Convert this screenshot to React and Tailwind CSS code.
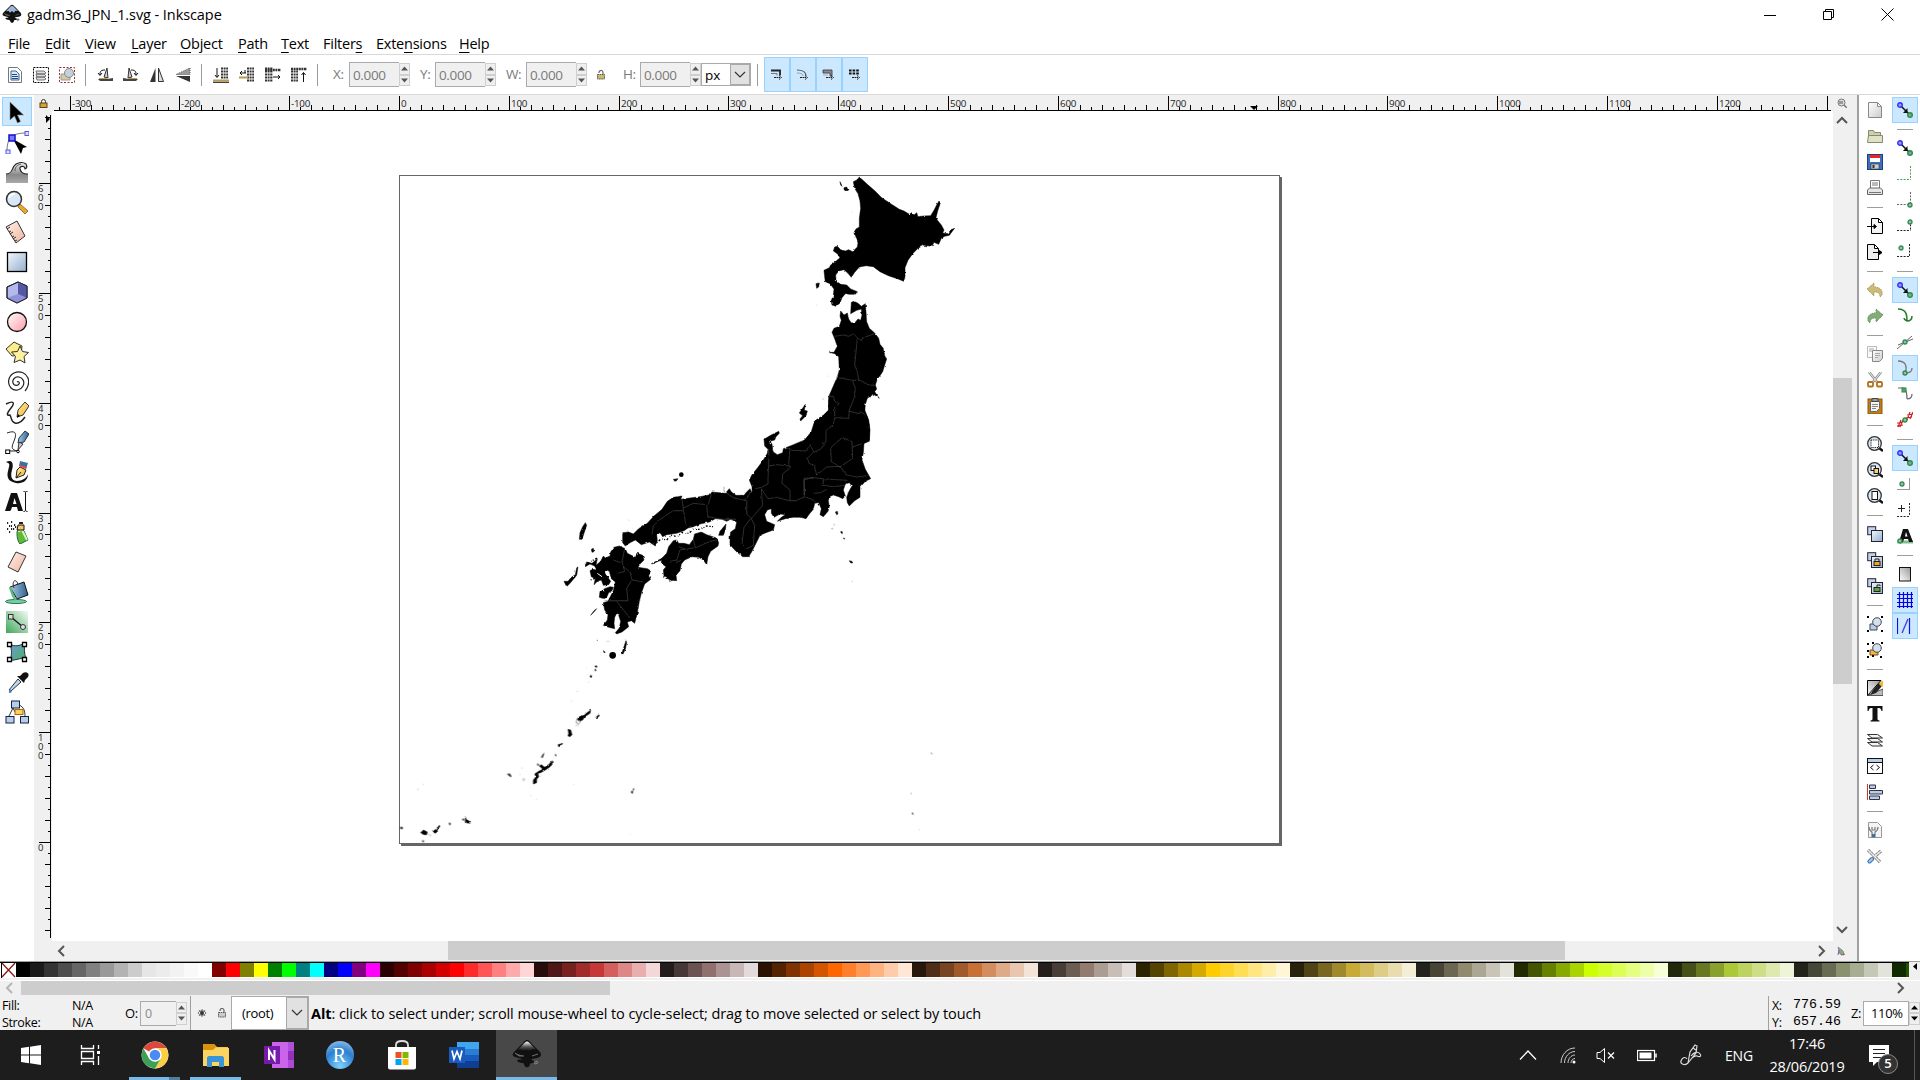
import React from "react";

const UI = "font-['Open_Sans','Noto_Sans',sans-serif]";

/* ---------- small helpers ---------- */
const Svg = ({ s = 16, vb, children, className = "" }) => (
  <svg width={s} height={s} viewBox={vb || `0 0 ${s} ${s}`} fill="none" className={`block shrink-0 ${className}`}>
    {children}
  </svg>
);

const Chevron = ({ d, color = "#555", w = 2 }) => (
  <Svg s={12}>
    <path d={d} stroke={color} strokeWidth={w} />
  </Svg>
);
const UP = "M1 9L6 4L11 9";
const DOWN = "M1 3L6 8L11 3";
const LEFT = "M8 1L3 6L8 11";
const RIGHT = "M4 1L9 6L4 11";

const Gradients = () => (
  <svg width="0" height="0" className="absolute">
    <defs>
      <linearGradient id="blue" x1="0" y1="0" x2="1" y2="1"><stop stopColor="#f4f8fc" /><stop offset="1" stopColor="#90afcd" /></linearGradient>
      <linearGradient id="pink" x1="0" y1="0" x2="1" y2="1"><stop stopColor="#fff" /><stop offset="1" stopColor="#ff9aa6" /></linearGradient>
      <linearGradient id="peach" x1="0" y1="0" x2="1" y2="1"><stop stopColor="#fff2ec" /><stop offset="1" stopColor="#f0b39c" /></linearGradient>
      <linearGradient id="wave" x1="0" y1="0" x2="0" y2="1"><stop stopColor="#eee" /><stop offset=".6" stopColor="#888" /><stop offset="1" stopColor="#aaa" /></linearGradient>
      <linearGradient id="paper" x1="0" y1="0" x2="1" y2="1"><stop stopColor="#fff" /><stop offset="1" stopColor="#ccc" /></linearGradient>
      <linearGradient id="page" x1="1" y1="0" x2="0" y2="1"><stop stopColor="#999" /><stop offset="1" stopColor="#fff" /></linearGradient>
      <linearGradient id="green" x1="0" y1="1" x2="1" y2="0"><stop stopColor="#3fa65a" /><stop offset="1" stopColor="#f4fbf5" /></linearGradient>
      <linearGradient id="mesh" x1="0" y1="0" x2="1" y2="1"><stop stopColor="#6a9ad0" /><stop offset="1" stopColor="#4fb06a" /></linearGradient>
      <linearGradient id="gold" x1="0" y1="0" x2="1" y2="1"><stop stopColor="#fff6b0" /><stop offset="1" stopColor="#f2a81c" /></linearGradient>
      <linearGradient id="steel" x1="0" y1="0" x2="1" y2="0"><stop stopColor="#aacbe4" /><stop offset="1" stopColor="#2c5f8d" /></linearGradient>
      <linearGradient id="ink" x1="0" y1="0" x2="0" y2="1"><stop stopColor="#fff" /><stop offset=".5" stopColor="#555" /><stop offset="1" stopColor="#000" /></linearGradient>
    </defs>
  </svg>
);

const InkscapeLogo = ({ s, top = "url(#ink)" }) => (
  <Svg s={s} vb="0 0 30 30">
    <path d="M15 1C17 1 18 3 20 5L28 13C30 16 29 18 25 19L20 20C18 21 23 22 24 23C22 25 19 23 18 25C18 27 16 29 14 28C12 28 13 25 11 24C8 24 5 23 5 21C8 20 9 21 10 20L3 18C0 17 0 15 3 12L11 4C12 3 13 1 15 1Z" fill="#111" />
    <path d="M15 2.5C16.500 2.500 18 4.500 19.500 6L24 10.500L20 10L18 13L15 10.500L12 13L10 10.500L6 11L11 5.500C12 4.500 13.500 2.500 15 2.500Z" fill={top} />
    <path d="M22 23l3-1 1 2-3 1zM3 14l4 3h5M20 17l6-2" fill="#555" stroke="#888" strokeWidth=".8" />
  </Svg>
);

/* ---------- title and menu ---------- */
const MENUS = [
  ["", "F", "ile", "w-[37px]"], ["", "E", "dit", "w-[40px]"], ["", "V", "iew", "w-[46px]"], ["", "L", "ayer", "w-[49px]"],
  ["", "O", "bject", "w-[58px]"], ["", "P", "ath", "w-[43px]"], ["", "T", "ext", "w-[42px]"], ["Filter", "s", "", "w-[53px]"],
  ["Exte", "n", "sions", "w-[83px]"], ["", "H", "elp", "w-[40px]"],
];

const TitleBar = () => (
  <div className="flex h-7 items-center bg-white">
    <div className="flex flex-1 items-center pl-[2px]">
      <InkscapeLogo s={20} top="#9fb6d8" />
      <span className="ml-[5px] pt-px text-[14.500px] leading-5 tracking-[-0.08px] text-black">gadm36_JPN_1.svg - Inkscape</span>
    </div>
    <div className="flex items-center gap-[46px] pr-[26px]">
      <Svg s={13} className="-mr-px"><path d="M0 7.500H12" stroke="#000" /></Svg>
      <Svg s={13}><path d="M1.500 3.500h8v8h-8zM3.500 3v-1.500h8v8h-2" stroke="#000" /></Svg>
      <Svg s={13}><path d="M.5 .5l12 12M12.500 .5l-12 12" stroke="#000" /></Svg>
    </div>
  </div>
);

const MenuBar = () => (
  <div className="flex h-[27px] items-center border-b border-[#d9d9d9] bg-white pl-2 pt-[4px] text-[14.500px] leading-[20px] tracking-[-0.24px] text-black">
    {MENUS.map(([a, u, b, w]) => (
      <span key={a + u + b} className={`${w} -mb-px shrink-0 whitespace-nowrap`}>
        {a}<span className="underline underline-offset-[3px]">{u}</span>{b}
      </span>
    ))}
  </div>
);

/* ---------- tool controls ---------- */
const Rows = ({ x = 0, y = 0, w = 10, n = 5 }) => (
  <>{Array.from({ length: n }, (_, i) => <path key={i} d={`M${x} ${y + i * 3}h${w}`} stroke="#333" strokeWidth="1.800" strokeDasharray="2 .6" />)}</>
);
const TopIcons = {
  page: <><path d="M1.500 .5h9l4 4v11h-13z" fill="#fff" stroke="#777" /><path d="M4 4h5l3 3v6H4z" fill="#dce9f6" stroke="#356397" /><path d="M5 7.500h5M5 9.500h6M5 11.500h6" stroke="#204a87" /></>,
  layers: <><rect x=".5" y=".5" width="15" height="15" stroke="#000" strokeDasharray="2 1" /><path d="M3 4h8l2 2-2 1H4zM3 7h8l2 2-2 1H4zM3 10h8l2 2-2 1H4z" fill="#ddd" stroke="#666" strokeWidth=".9" /></>,
  shape: <><rect x=".5" y=".5" width="15" height="15" stroke="#a03030" strokeDasharray="2 1.500" /><path d="M2 7h9v6H2z" fill="#d9c9a0" stroke="#999" /><circle cx="10" cy="6" r="4.500" fill="#c5d0dc" stroke="#888" /></>,
  rotL: <><path d="M10 1L7 10l4 1z" fill="#ccc" stroke="#333" /><path d="M1 12h9l6-1v3H3z" fill="#444" /><path d="M2 11.500h8" stroke="#b99b52" /><path d="M8 3C3 3 3 5 3 8M1 6l2 2.500L5 6" stroke="#111" /></>,
  rotR: <><path d="M6 1l3 9-4 1z" fill="#ccc" stroke="#333" /><path d="M15 12H6l-6-1v3h13z" fill="#444" /><path d="M14 11.500H6" stroke="#b99b52" /><path d="M8 3c5 0 5 2 5 5M11 6l2 2.500L15 6" stroke="#111" /></>,
  flipH: <><path d="M6.500 1v14H1z" fill="#333" /><path d="M9.500 1v13.500h5z" fill="#ddd" stroke="#333" /></>,
  flipV: <><path d="M15 1v6.500H1z" fill="#999" stroke="#555" strokeDasharray="1 1" /><path d="M15 9v6L1 9z" fill="#333" /></>,
  bottom: <><Rows x={8} y={1.500} w={7} n={4} /><path d="M0 13.500h16" stroke="#b99b52" strokeWidth="2" /><path d="M0 15.300h16M4 1v9M2 8l2 2.500 2-2.500" stroke="#111" /></>,
  lower: <><Rows x={8} y={1.500} w={7} n={5} /><path d="M0 10.500h9" stroke="#b99b52" strokeWidth="2" /><path d="M1 6h6M1 6l2-2M1 6l2 2M6 6V3" stroke="#111" /></>,
  raise: <><Rows x={0} y={1.500} w={8} n={5} /><path d="M0 3h16" stroke="#333" strokeWidth="2.500" strokeDasharray="2 .6" /><path d="M8 10h7M13 8l2 2-2 2" stroke="#111" /></>,
  top: <><Rows x={0} y={4.500} w={7} n={4} /><path d="M0 2h16" stroke="#333" strokeWidth="2.500" strokeDasharray="2 .6" /><path d="M12.500 15V6M10.500 8l2-2.500 2 2.500" stroke="#111" /></>,
};
const Sep = ({ className }) => <div className={`h-[22px] w-px shrink-0 bg-[#9a9a9a] ${className}`} />;
const IconRun = ({ names, className }) => (
  <div className={`flex shrink-0 gap-[10px] ${className}`}>
    {names.map((n) => <Svg key={n}>{TopIcons[n]}</Svg>)}
  </div>
);

const Spin = ({ dark, className = "" }) => {
  const c = dark ? "#000" : "#555";
  return (
    <div className={`flex w-[11px] shrink-0 flex-col ${className}`}>
      <div className="flex flex-1 items-center justify-center border border-[#cfcfcf] bg-[#efefef]"><Svg s={7}><path d="M0 5.500L3.500 1.500L7 5.500z" fill={c} /></Svg></div>
      <div className="flex flex-1 items-center justify-center border border-[#cfcfcf] bg-[#efefef]"><Svg s={7}><path d="M0 1.500L3.500 5.500L7 1.500z" fill={c} /></Svg></div>
    </div>
  );
};
const NumField = ({ label, w }) => (
  <div className="flex shrink-0 items-center text-[13.500px] tracking-[-0.35px] text-[#7a7a7a]">
    <span className={`${w} shrink-0`}>{label}</span>
    <div className="flex h-[25px] w-[50px] items-center border border-r-0 border-[#a9a9b0] bg-[#f0f0f0] pl-[3px] pt-px">0.000</div>
    <Spin className="h-[23px]" />
  </div>
);
const Lock = ({ color = "#c9b96a", open }) => (
  <Svg s={10}>
    <path d={open ? "M3 3V2.500a2 2 0 014 0V5" : "M3 5V3a2 2 0 014 0v2"} stroke="#666" strokeWidth="1.200" />
    <rect x="1.500" y="4.500" width="7" height="4.500" fill={color} stroke="#555" strokeDasharray="1.500 .7" />
  </Svg>
);
const AFFECT = [
  <><path d="M3 4.500h9v5" stroke="#222" strokeWidth="1.800" /><path d="M3 7.500h6v2" stroke="#777" /></>,
  <><path d="M3 4c6 0 9 2 9 6" stroke="#555" strokeWidth="1.200" /><path d="M3 7c4 0 6 1 6 3" stroke="#999" /></>,
  <><path d="M3 4h9v6h-2V7H3z" fill="#889" stroke="#444" strokeWidth=".9" /><path d="M3 9h5" stroke="#aaa" /></>,
  <><path d="M3 4.500h10M3 7.500h10" stroke="#111" strokeWidth="2" strokeDasharray="2.600 1" /></>,
];
const ToolControls = () => (
  <div className="flex h-10 items-center border-b border-[#d9d9d9] bg-white">
    <IconRun className="ml-[7px]" names={["page", "layers", "shape"]} />
    <Sep className="ml-[10px]" />
    <IconRun className="ml-[11px]" names={["rotL", "rotR", "flipH", "flipV"]} />
    <Sep className="ml-[10px]" />
    <IconRun className="ml-[11px]" names={["bottom", "lower", "raise", "top"]} />
    <Sep className="ml-[10px]" />
    <div className="w-[15px] shrink-0" />
    <NumField label="X:" w="w-[16px]" />
    <div className="w-[10px] shrink-0" />
    <NumField label="Y:" w="w-[15px]" />
    <div className="w-[10px] shrink-0" />
    <NumField label="W:" w="w-[20px]" />
    <div className="flex w-[36px] shrink-0 justify-center pr-2"><Lock open /></div>
    <NumField label="H:" w="w-[17px]" />
    <div className="flex h-[23px] w-[50px] shrink-0 border border-[#a9a9b0] bg-white text-[13.500px] text-black">
      <span className="flex flex-1 items-center pl-[3px] pt-px">px</span>
      <span className="flex w-[20px] items-center justify-center border border-[#a9a9a9] bg-[#e1e1e1]"><Chevron d={DOWN} w={1.200} color="#333" /></span>
    </div>
    <Sep className="ml-[6px]" />
    <div className="ml-[6px] flex shrink-0">
      {AFFECT.map((g, i) => (
        <div key={i} className="flex h-[35px] w-[26px] items-center justify-center border border-[#99d1ff] bg-[#cce8ff]">
          <Svg s={16} className="-ml-[2px] -mt-[1px]">{g}<path d="M6 11.500h6M11 9.500l2.500 2-2.500 2" stroke="#222" strokeDasharray="2 .5" /></Svg>
        </div>
      ))}
    </div>
  </div>
);

/* ---------- toolbox ---------- */
const TOOLS = [
  <path d="M5 2v18l4.500-4 3 7 3-1.500-3-6.500h6z" fill="#000" stroke="#888" strokeWidth=".6" />,
  <><path d="M2 22C2 8 6 3 22 3" stroke="#777" /><path d="M8 9l14 8-4 1-2 6z" fill="#000" /><rect x="4" y="5" width="6" height="6" fill="#7a7aff" stroke="#11c" strokeWidth="1.500" /><rect x="20" y="1.500" width="4" height="4" fill="#ddf" stroke="#55e" /><rect x="1" y="20" width="4" height="4" fill="#ddf" stroke="#55e" /></>,
  <><path d="M1 14c6 0 6-5 8-8s8-5 12-2c2 3 0 5-1 5 0-4-6-3-5 0s2 5 8 5v9H1z" fill="url(#wave)" /><path d="M1 14c6 0 6-5 8-8s8-5 12-2c2 3 0 5-1 5 0-4-6-3-5 0s2 5 8 5" stroke="#222" strokeWidth="1.200" /><path d="M10 11c0-4 2-6 6-7" stroke="#555" /></>,
  <><path d="M15 14l8 7-3 3-7-7z" fill="#f3a81c" stroke="#875" /><circle cx="9" cy="9" r="7.500" fill="#d9e8f7" stroke="#333" strokeWidth="1.500" /><path d="M4 8c1-3 3-4 6-4" stroke="#fff" strokeWidth="2" /></>,
  <><path d="M1 7L12 1l8 15-9 7z" fill="url(#peach)" stroke="#333" /><path d="M2 9l3-2M4 12l2-1M5 14l3-2M7 17l2-1M8 19l3-2M10 21l2-1" stroke="#333" /></>,
  <rect x="2.500" y="2.500" width="19" height="19" fill="url(#blue)" stroke="#000" strokeWidth="1.300" />,
  <><path d="M2 7l11-5 9 4v12l-10 5-10-5z" fill="#b4b8ea" stroke="#223" /><path d="M13 14l9 4-10 5-10-5z" fill="#8e92d8" /><path d="M13 3l9 3v12l-9-4z" fill="#5357a4" /><path d="M2 7l11-5 9 4v12l-10 5-10-5z" stroke="#223" /></>,
  <circle cx="12" cy="12" r="9.500" fill="url(#pink)" stroke="#111" strokeWidth="1.300" />,
  <><path d="M9 2l8 4-1 9-9 1-6-7z" fill="#fcec8a" stroke="#333" /><path d="M15 6l2.500 5.500 6 1-4.500 4 1 6.500-5-3-6 2.500 1.500-6-4-4.500 6-.5z" fill="#fdf0a0" stroke="#333" /></>,
  <path d="M12 12c1-1 3 0 2 2s-5 2-6-1 2-7 6-6 6 5 4 9-8 6-12 2-3-12 3-15 12 0 14 5-1 11-3 13" stroke="#222" strokeWidth="1.200" />,
  <><path d="M1 4c8-4 9-1 5 4s-5 8-1 7c2 4 1 7 5 8s8-3 10-6" stroke="#222" strokeWidth="1.500" /><path d="M12 17l1-7 7-8 4 4-6 9z" fill="url(#gold)" stroke="#333" /><path d="M12 18l1-4 2 2z" fill="#000" /></>,
  <><path d="M2 3c11-4 9 3 7 8s-4 9 4 10H4" stroke="#222" /><path d="M13 13l1-5 6-7 4 3-5 8z" fill="url(#steel)" stroke="#234" /><path d="M13 20l1-8 4 2z" fill="#ccc" stroke="#333" /><rect x=".7" y="20" width="4" height="3.500" fill="#fff" stroke="#000" /><circle cx="13" cy="21.500" r="1.300" fill="#fff" stroke="#000" /></>,
  <><path d="M1 2c6-3 8 1 6 8s0 11 5 11 10-3 11-7c0 7-6 10-12 9S1 19 3 11s2-7-2-9z" fill="#111" /><path d="M11 18l1-8 3-3 6 3-2 5z" fill="url(#gold)" stroke="#222" /><path d="M14 6l1-5 8 2-2 6z" fill="#3e6f9d" /><path d="M14.500 5.500l7 2.500" stroke="#e44" strokeWidth="1.800" /><path d="M11 18l5-6" stroke="#222" /></>,
  <><path d="M6 3h6l6 18h-5l-1-4H7l-1 3-1 1H0zM8 14h3.500L9.500 8z" fill="#111" fillRule="evenodd" /><path d="M18.500 1.500c1.500 0 2 0 2 1v17.500c0 1-.5 1.500-2 1.500M22.500 1.500c-1.500 0-2 0-2 1M22.500 21.500c-1.500 0-2-.5-2-1.500" stroke="#111" /></>,
  <><path d="M12 12c0-3 5-4 7-1l4 9-8 4c-3-4-3-8-3-12z" fill="#62bb33" stroke="#264" /><path d="M14 12c0-1 1-3 3-2l5 10" stroke="#d8f7c0" strokeWidth="2" /><path d="M13 5h6v5h-7z" fill="#f3c56c" stroke="#111" /><path d="M14 3h4" stroke="#222" strokeWidth="2" /><path d="M2 3h2M6 2h2M4 6h3M9 5h2M2 9h2M6 9h4M4 12h2M10 7h2" stroke="#222" strokeWidth="1.800" strokeDasharray="1.200 .8" /></>,
  <path d="M11 2l10 4-8 16-10-5z" fill="url(#peach)" stroke="#333" />,
  <><ellipse cx="11" cy="21.500" rx="10.500" ry="2" fill="#7ed09b" stroke="#276" /><path d="M5 7l14-5 4 13-11 4z" fill="url(#steel)" stroke="#111" /><path d="M5 7c2 5 2 9 6 13" stroke="#5cba7c" strokeWidth="2.500" /><path d="M9 8c-3-8 3-10 4-3" stroke="#333" /></>,
  <><rect x="1" y="1" width="22" height="22" fill="url(#green)" /><path d="M6 7l12 10" stroke="#111" strokeWidth="1.300" /><rect x="3.500" y="4.500" width="4.500" height="4.500" fill="#ddd" stroke="#333" /><circle cx="18" cy="17" r="2.500" fill="#ddd" stroke="#333" /></>,
  <><path d="M5 4c5 3 9 2 15-1-1 6-1 9 1 16-6-2-10 2-16 1 2-5 2-10 0-16z" fill="url(#mesh)" stroke="#234" /><path d="M2.500 2.500h4v4h-4zM17.500 2.500h4v4h-4zM2.500 17.500h4v4h-4zM17.500 17.500h4v4h-4z" fill="#fff" stroke="#000" strokeWidth="1.300" /></>,
  <><path d="M13 9l3 3-10 9-2-1z" fill="#b9d5ef" stroke="#333" /><path d="M12 6l7 7 1-3 3-3c2-4-2-6-5-4l-3 3z" fill="#111" /><path d="M5 19c-2 3-1 4 0 4s3-1 0-4z" fill="#4c83c3" /></>,
  <><path d="M8 8L3 18M14 5c5 2 6 6 6 12M8 8l2 4" stroke="#333" /><rect x="6.500" y="1" width="8" height="7" fill="#b9cde8" stroke="#124" /><rect x="10" y="9.500" width="8" height="5" fill="#fcd060" stroke="#a60" /><rect x="1" y="16.500" width="8" height="6.500" fill="#b9cde8" stroke="#124" /><rect x="15.500" y="16.500" width="8" height="6.500" fill="#b9cde8" stroke="#124" /></>,
];
const Toolbox = () => (
  <div className="flex w-[34px] shrink-0 flex-col items-center bg-white pt-[2px]">
    {TOOLS.map((t, i) => (
      <div key={i} className={i === 0 ? "mb-px flex h-[29px] w-[30px] items-center justify-center border border-[#99d1ff] bg-[#cce8ff]" : "flex h-[30px] w-[30px] items-center justify-center"}>
        <Svg s={24}>{t}</Svg>
      </div>
    ))}
  </div>
);

/* ---------- rulers ---------- */
const STEP = 10.983;
const HRuler = () => {
  const ticks = [];
  for (let i = -31; i <= 130; i++) {
    const x = Math.round(399 + i * STEP) - 52;
    if (x < 4 || x > 1779) continue;
    const h = i % 10 === 0 ? 14 : i % 2 === 0 ? 5 : 3;
    ticks.push(<path key={i} d={`M${x + 0.5} 15v-${h}`} stroke="#000" />);
    if (i % 10 === 0 && i < 130) ticks.push(<text key={"t" + i} x={x + 2} y="12" fontSize="9.800" letterSpacing="-.2" fill="#222">{i * 10}</text>);
  }
  return (
    <svg width="1781" height="16" className="block">
      {ticks}
      <path d="M2 15.500H1779" stroke="#000" />
      <path d="M1198 11h8l-4 4z" fill="#000" />
    </svg>
  );
};
const VRuler = () => {
  const ticks = [];
  for (let i = -8; i <= 66; i++) {
    const y = Math.round(842 - i * STEP) - 111;
    if (y < 1) continue;
    const h = i % 10 === 0 ? 12 : i % 2 === 0 ? 6 : 3;
    ticks.push(<path key={i} d={`M17 ${y + 0.5}h-${h}`} stroke="#000" />);
    if (i % 10 === 0)
      ticks.push(
        <text key={"t" + i} y={y + 9} fontSize="9.500" fill="#222">
          {String(i * 10).split("").map((c, k) => <tspan key={k} x="4" dy={k ? 9 : 0}>{c}</tspan>)}
        </text>
      );
  }
  return (
    <svg width="18" height="827" className="block">
      {ticks}
      <path d="M16.500 4V827" stroke="#000" />
      <path d="M12 4v8l4-4z" fill="#000" />
    </svg>
  );
};

/* ---------- map ---------- */
const LAND_NORTH = [
  "M238 36L262 58 285 78 305 98 330 115 358 133 372 138 388 148 395 143 402 150 410 143 414 155 430 153 452 152 462 136 470 120 477 108 481 114 473 138 468 158 474 168 484 180 492 195 488 204 505 206 512 194 524 190 516 200 508 211 494 214 484 220 476 238 462 232 456 244 430 241 414 250 398 266 384 286 375 308 375 335 371 349 352 341 325 332 300 320 280 305 258 302 238 306 224 322 214 337 204 325 192 314 176 318 167 330 168 348 182 358 200 360 212 372 232 380 226 388 208 388 196 386 186 398 180 414 168 424 156 420 153 408 160 392 162 372 150 356 136 350 134 336 132 316 148 308 152 300 166 290 180 278 172 266 160 258 164 246 172 244 182 254 196 258 206 254 218 260 232 246 234 234 228 216 222 202 228 192 238 186 238 160 242 130 240 108 234 86 224 70 220 50 232 44Z",
  "M214 412L222 409 234 415 244 424 256 416 258 440 260 470 268 490 284 504 296 520 300 538 310 550 314 572 320 582 314 600 308 620 300 632 292 642 286 660 290 672 284 680 298 700 290 694 280 688 262 700 256 718 254 740 262 756 268 780 268 825 252 835 240 850 20 850 40 842 72 828 94 800 104 768 130 752 146 736 146 706 158 676 168 650 178 615 176 575 164 566 148 562 162 562 172 544 162 516 156 502 162 490 178 484 184 466 180 454 182 438 192 450 202 444 206 462 214 474 226 472 234 462 242 466 246 450 244 432 230 436 212 446Z",
  "M76 718L73 736 82 738 78 752 62 768 60 762 68 752 58 744Z",
  "M192 68l8-2 4 8-6 4-6-4zM180 50l4 8 2 6-4-4zM108 356l10-2-2 12-6 4z",
];
const LAND_SOUTH = [
  "M932 296L916 304 900 322 900 352 884 362 868 378 862 368 860 352 866 336 876 318 868 308 856 312 850 330 856 348 848 356 836 350 820 345 808 350 805 362 808 380 804 394 790 410 780 404 784 386 776 368 764 370 760 388 748 402 738 416 722 412 700 412 676 416 652 424 664 412 676 404 660 402 642 412 634 400 634 386 622 390 614 404 620 424 644 434 640 450 618 458 600 466 590 486 576 514 566 530 548 530 528 514 510 494 510 470 512 456 526 446 530 426 512 418 500 424 486 418 466 416 448 426 420 432 400 440 384 444 372 452 350 460 320 464 308 470 300 458 290 464 292 482 286 498 268 486 244 494 226 480 210 488 196 498 188 488 188 458 206 456 220 462 236 446 262 430 282 408 306 388 322 364 340 352 366 348 362 358 390 354 420 350 450 344 456 336 496 340 508 326 514 336 528 346 552 346 560 336 570 326 576 340 576 320 568 300 576 284 594 262 610 240 622 220 624 208 614 198 612 178 632 166 656 154 658 160 648 170 644 180 630 184 636 192 638 206 640 216 652 224 668 218 670 206 700 194 734 180 756 156 766 122 790 106 806 90 806 50 828 0 910 20 914 90 926 120 930 150 928 184 912 190 910 218 906 240 916 268Z",
  "M340 482L350 480 356 490 372 490 388 494 400 478 404 462 424 456 440 464 470 474 476 488 474 498 452 514 444 530 440 554 430 540 416 532 396 530 374 540 364 552 360 572 348 586 350 602 330 600 312 588 310 570 318 560 304 550 304 536 320 520 326 500Z",
  "M274 551L306 535 304 540 278 551Z",
  "M498 432L496 450 490 466 476 466 480 454Z",
  "M152 516L162 502 178 498 196 506 202 520 226 532 232 520 248 526 252 540 240 552 234 562 262 566 272 572 266 588 272 598 254 612 244 640 238 664 232 700 224 730 214 722 202 726 206 740 186 756 170 762 166 758 178 744 182 724 176 706 180 704 170 700 164 712 162 730 164 746 146 742 130 736 136 728 142 720 144 704 134 690 130 668 144 664 150 652 160 632 166 606 154 596 148 574 140 570 134 578 142 590 152 604 146 614 130 616 124 600 112 604 102 614 106 596 94 590 90 572 98 568 110 570 104 558 90 552 76 560 80 546 96 550 112 536 108 556 122 544 130 528 136 534 150 528Z",
  "M120 634L134 626 150 620 160 622 156 632 146 638 140 652 132 656 118 652Z",
  "M76 428L80 436 72 460 66 478 58 478 60 458 68 440Z",
  "M12 604L24 604 34 592 46 584 50 564 54 560 50 586 40 598 30 610 20 620Z",
  "M94 508l6-3 2 10-6 2zM198 782l2 6-4 20-8 16-4 0 8-24z",
];
const LAND_ISLES = [
  "M602 210L600 220 584 230 578 240 568 244 562 238 568 230 582 226 594 216Z",
  "M618 232l8-8 2 4-8 6zM534 268l8 2 4 14-6 6-6-2 2-8zM504 314l14-4-6 8-6 2z",
  "M486 362L486 374 478 382 466 390 452 398 444 400 446 410 440 418 440 428 430 432 430 420 438 410 434 402 446 394 458 388 448 378 454 374 464 382 476 374Z",
  "M92 578l8-8 12 6-2 8-8 0-8-4zM128 572l8-2 12-14 2 2-8 12 0 6-8 4zM226 530l2 8 14 8-2 4-14-2 0-8z",
];
/* islets too small to outline, drawn without the coast filter */
const DOTS_NORTH = "M214 140h3M109 421h3M144 633l3 1M127 703l3-2";
const DOTS_SOUTH = "M826 396l6-2 2 8-4 2zM842 455l4-1 2 6-4 0zM850 474l4 1-1 3zM868 542l8 2 2 5-6 0zM340 298l14-2-4 6-6 2zM130 812l6 5-4 1zM104 858l6 0-2 4zM106 868l3 4M90 888l6 2-4 2zM92 706l10-14 8-6-8 10zM110 781h4";
const FAINT_SOUTH = "M822 430l1 8M814 446l4-2 0 4zM140 784h8M205 420l3 1M788 57h3M875 604h4M80 545l-8 8";
const DOTS_ISLES = "M352 402l8 0 4 8-6 -2zM442 372l6 3-6 0zM454 352l4-8 4-4-4 12zM494 344l4 0 0 4zM724 454l5 0-2 6-3-2zM728 448l4-2-1 4zM176 550l6 0-2 5zM216 538l6-1 0 4zM30 562l8 0 0 4-6 0zM96 602l6 1-2 3zM614 88l4 1-2 4zM600 108l5-2-1 6zM618 78l3 1-1 3zM1622 338l5 4M1563 459v3M1565 519l4 1v3z";
const FAINT_ISLES = "M588 85l2 1M592 104l2 1M594 126h3M560 154h4M543 184h3M556 256h10M388 403h3M394 384h4M420 466l3 1M438 478h3M82 448h4M98 433h3M550 433h3M720 583h2M118 588h4M398 416h6v5h-6zM450 410l4-4M110 580l14 6M1586 569h3";

const BORDERS_NORTH = [
  "M164 514L190 510 206 514 220 506 232 518 240 526 256 516 284 506", "M232 522L228 560 224 600 232 620 236 646",
  "M168 636L196 642 218 646 240 646 262 658 284 662", "M218 648L226 670 222 700 208 736 206 760", "M146 694l14 0 4 14 14 8-14 10 0 28",
  "M206 738l30 8 6-6 14 10", "M208 760L164 758 160 780 138 796 138 830 126 838",
  "M152 850l14-16 22-16 28 12 2 50-38 26-26-16z", "M218 846l28-10", "M20 850l18 6 40 2 12-18 12 22 20-10 12-14",
  "M100 862L82 880 88 896 102 900 110 930 140 906 180 904 200 930 230 936 262 932", "M72 990V940l30-2 30 4 70 4",
];
const BORDERS_SOUTH = [
  "M690 206L686 250 692 262 668 282 666 310 690 330 690 362", "M626 206L626 258 650 254 688 258", "M626 258l-2 34 0 20-20 10-18 4", "M604 326l20 30 26-4 38 10 20 0",
  "M708 362L734 350 732 300 758 292", "M734 350l26 10 8 8M762 340l20-2 18-10M790 298l0 18 30 4 36-4",
  "M604 326l4 50-34 40-14-14 0-40-38-8-30-20 0-14", "M574 416l10 20-4 60-20 10-14-14 6-50 20-26M552 362l26-32",
  "M370 392l-30 0-40 26-20 20-4 26", "M366 356l4 30 8 52M370 384l30-14 40 4 4 40", "M444 374l10-30M444 410l44 8 40 0",
  "M400 478l6 26 30-14 36-12M356 500l26 10M348 548l16-8M400 504l-40 6-10 30-20 4",
  "M190 560l20 16 6 24 34 6M214 602l-14 24 4 36-70 0M170 664l40 50M194 506l-8 40 8 28-20 6M160 540l22 8",
];
const Place = ({ at, children, ...rest }) => <g transform={`translate(${at}) scale(.33333)`} {...rest}>{children}</g>;
const NORTH = "780 165";
const SOUTH = "560 380";
const ISLES = "390 640";
const JapanMap = () => (
  <svg width="881" height="668" viewBox="399 175 881 668" className="-ml-px -mt-px block max-w-none">
    <defs>
      <filter id="coast" filterUnits="userSpaceOnUse" x="399" y="175" width="881" height="668">
        <feTurbulence type="fractalNoise" baseFrequency=".25" numOctaves="2" seed="7" />
        <feDisplacementMap in="SourceGraphic" scale="2.200" xChannelSelector="R" yChannelSelector="G" />
      </filter>
    </defs>
    <g filter="url(#coast)">
      <g fill="#000" stroke="#000" strokeWidth="1.500">
        <Place at={NORTH}>{LAND_NORTH.map((d) => <path key={d} d={d} />)}</Place>
        <Place at={SOUTH}>{LAND_SOUTH.map((d) => <path key={d} d={d} />)}</Place>
        <Place at={ISLES}>{LAND_ISLES.map((d) => <path key={d} d={d} />)}</Place>
      </g>
      <Place at={SOUTH} fill="none">
        <path d="M76 556l20-14 16-8M92 600l16-6 8 14M128 630l-8 20M290 488l14-12 16 4 14-14 18 4 14-12 20 2 14-12 22 0 18-10 20 2M612 176l22 20M300 540l20-10M310 590l24 12 16-6M262 570l10 20" stroke="#000" strokeWidth="4" strokeDasharray="3 5 6 7 2 4" />
        <path d="M112 580l14 10M124 620l8 14M628 188l5 4" stroke="#fff" strokeWidth="3" />
      </Place>
      <g fill="none" stroke="#5e5e5e" strokeWidth="1.500">
        <Place at={NORTH}>{BORDERS_NORTH.map((d) => <path key={d} d={d} />)}</Place>
        <Place at={SOUTH}>{BORDERS_SOUTH.map((d) => <path key={d} d={d} />)}</Place>
      </g>
    </g>
    <Place at={NORTH}><path d={DOTS_NORTH} fill="none" stroke="#aaa" strokeWidth="1.500" /></Place>
    <Place at={SOUTH}>
      <circle cx="364" cy="284" r="7" fill="#000" />
      <circle cx="158" cy="826" r="10" fill="#000" />
      <path d={DOTS_SOUTH} fill="#111" stroke="#111" strokeWidth="1.500" />
      <path d={FAINT_SOUTH} fill="none" stroke="#999" strokeWidth="1.500" />
    </Place>
    <Place at={ISLES}>
      <path d={DOTS_ISLES} fill="#222" stroke="#222" strokeWidth="1.800" />
      <path d="M562 234l-4 14 8 4 6-8" stroke="#333" strokeWidth="1.500" fill="none" />
      <path d={FAINT_ISLES} fill="none" stroke="#999" strokeWidth="1.500" />
    </Place>
  </svg>
);

const CanvasArea = () => (
  <div className="flex w-[1825px] shrink-0 flex-col border-r-2 border-[#a0a0a0] bg-[#f0f0f0]">
    <div className="flex h-4">
      <div className="flex w-[18px] shrink-0 items-center pl-[5px]"><Svg s={9}><path d="M2.500 4V2.500a2 2 0 014 0V4" stroke="#333" /><rect x="1" y="4" width="7" height="4.500" fill="#d9a520" stroke="#543" /></Svg></div>
      <HRuler />
      <div className="flex flex-1 items-center justify-center pr-[7px]"><Svg s={10}><circle cx="4.500" cy="4.500" r="3.500" fill="#ddd" stroke="#777" /><path d="M7 7l3 3" stroke="#777" strokeWidth="1.500" /><path d="M3 3v3M5 3v3" stroke="#555" /></Svg></div>
    </div>
    <div className="flex h-[830px]">
      <div className="w-[18px] shrink-0"><VRuler /></div>
      <div className="relative w-[1781px] shrink-0 overflow-hidden bg-white">
        <div className="absolute left-[347px] top-[64px] h-[669px] w-[881px] border border-[#666] bg-white shadow-[2px_2px_0_0_#666]">
          <JapanMap />
        </div>
      </div>
      <div className="flex w-[19px] shrink-0 flex-col items-center pb-[5px] pr-px pt-[3px]">
        <Chevron d={UP} />
        <div className="-mr-px mt-[252px] h-[306px] w-[19px] shrink-0 bg-[#cdcdcd]" />
        <div className="flex-1" />
        <Chevron d={DOWN} />
      </div>
    </div>
    <div className="flex h-[20px] items-center">
      <div className="flex w-[414px] shrink-0 pl-[22px]"><Chevron d={LEFT} /></div>
      <div className="h-[19px] w-[1117px] shrink-0 self-start bg-[#cdcdcd]" />
      <div className="flex flex-1 items-center justify-end gap-[9px] pr-[11px]">
        <Chevron d={RIGHT} />
        <Svg s={10}><path d="M2 1l5 4 1 4-4-1z" fill="#7fae8e" stroke="#888" /><path d="M2 9l1-5" stroke="#669" /><path d="M5 9l4-1" stroke="#b55" /></Svg>
      </div>
    </div>
  </div>
);

/* ---------- right-hand bars ---------- */
const mag = (inner) => <><path d="M12 12l4 3" stroke="#111" strokeWidth="2.500" /><circle cx="7.500" cy="7.500" r="6.800" fill="#dbe8f5" stroke="#333" strokeWidth="1.300" />{inner}</>;
const pair = (inner) => <><rect x=".7" y=".7" width="8" height="8" fill="#c2d3ea" stroke="#223" /><rect x="4.500" y="4.500" width="11" height="11" fill="url(#blue)" stroke="#223" />{inner}</>;
const COMMANDS = [
  <path d="M1.500 .5h9l4 4v11h-13zM10.500 .5v4h4" fill="url(#paper)" stroke="#888" />,
  <><path d="M1.500 13V2.500h5l1 2h6V13z" fill="#cdd0b0" stroke="#888a6a" /><path d="M.5 14.500l1-7h14v7z" fill="#dfe2c6" stroke="#888a6a" /></>,
  <><rect x=".5" y=".5" width="15" height="15" fill="#3a6fc0" stroke="#1d3f7c" /><path d="M3 1h10v3H3z" fill="#e22" /><path d="M3 4h10v4H3z" fill="#fff" /><path d="M4 10h8v5H4z" fill="#ccc" stroke="#333" strokeWidth=".6" /><path d="M5.500 11h2v3h-2z" fill="#333" /></>,
  <><path d="M3.500 9V.5h9V9" fill="#fff" stroke="#777" /><path d="M.5 14.500V10l2-2h11l2 2v4.500z" fill="#e6e6e6" stroke="#666" /><path d="M2 12.500h12M5 3h6M5 5h6" stroke="#777" /></>,
  "sep",
  <><path d="M4.500 .5h7l4 4v11h-11zM11.500 .5v4h4" fill="#f4f4f4" stroke="#000" /><path d="M0 8.500h8M7 6.500l2.500 2L7 10.500z" fill="#000" stroke="#000" /></>,
  <><path d="M.5 .5h7l4 4v11H.5zM7.500 .5v4h4" fill="#eee" stroke="#000" /><path d="M6 8.500h8M12.500 6.500l2.500 2-2.500 2z" fill="#000" stroke="#000" /></>,
  "sep",
  <path d="M0 7l7-6v4c6 0 9 3 8 8l-2 2c0-4-2-5-6-5v4z" fill="#cbbb78" stroke="#9d8b48" strokeDasharray="1 1" />,
  <path d="M16 7L9 1v4C3 5 0 8 1 13l2 2c0-4 2-5 6-5v4z" fill="#83ad77" stroke="#4f8348" strokeDasharray="1 1" />,
  "sep",
  <><path d="M.5 .5h9v11h-9z" fill="#fafafa" stroke="#bbb" /><path d="M5.500 4.500h10v8l-3 3h-7z" fill="url(#paper)" stroke="#888" /><path d="M8 7.500h5M8 9.500h5M8 11.500h3M2 3h5M2 5h3" stroke="#aaa" /></>,
  <><path d="M2 0l8 10M14 0L6 10" stroke="#777" strokeWidth="2.400" /><path d="M2 0l8 10M14 0L6 10" stroke="#e4e4e4" strokeWidth="1.200" /><rect x="1" y="10" width="5" height="4.500" rx="1" stroke="#b5701a" strokeWidth="1.800" /><rect x="10" y="10" width="5" height="4.500" rx="1" stroke="#b5701a" strokeWidth="1.800" /></>,
  <><rect x="1" y="1" width="14" height="15" fill="#c17d11" stroke="#8a5a10" /><path d="M3.500 3.500h9v7l-3 3h-6z" fill="#f4f4f4" stroke="#666" /><path d="M5 .5h6v3H5z" fill="#999" stroke="#444" /><path d="M5 6.500h6M5 8.500h6M5 10.500h4" stroke="#888" /></>,
  "sep",
  mag(<rect x="4" y="4" width="7.500" height="7.500" fill="#fff" stroke="#111" strokeDasharray="1.200 1" />),
  mag(<><rect x="4" y="4" width="4.500" height="4.500" fill="#fff" stroke="#111" /><rect x="7" y="6.500" width="4.500" height="5" fill="#f8d070" stroke="#111" /></>),
  mag(<rect x="5" y="3.500" width="5.500" height="8" fill="#fff" stroke="#111" />),
  "sep",
  pair(null),
  pair(<><rect x="7" y="9.500" width="6" height="4" fill="#f3a81c" stroke="#222" /><path d="M8 9V7h4v2" stroke="#222" /></>),
  pair(<><rect x="7" y="9.500" width="6" height="4" fill="#57a639" stroke="#222" /><path d="M10 9V7h3v1" stroke="#222" /></>),
  "sep",
  <><path d="M0 0h2v2H0zM14 0h2v2h-2zM0 14h2v2H0zM14 14h2v2h-2z" fill="#000" /><path d="M3 8h7v6H3z" fill="#b9cde8" stroke="#445" /><circle cx="10" cy="6" r="4.300" fill="#d3e0ee" stroke="#445" /></>,
  <><path d="M3 8h8v5H3z" fill="#f5b63a" stroke="#742" /><circle cx="10" cy="6" r="4.300" fill="#d3e0ee" stroke="#445" /><path d="M0 1h2v2H0zM5 0h2v2H5zM14 0h2v2h-2zM0 14h2v2H0zM13 14h2v2h-2zM0 8h2v2H0zM5 13h2v2H5z" fill="#000" /></>,
  "sep",
  <><path d="M.5 15.500V.5H14z" fill="url(#page)" stroke="#000" /><path d="M0 15.500h16V9z" fill="#bbb" stroke="#333" strokeWidth=".8" /><path d="M12 3l3 3-6 7-6 2 3-5z" fill="#222" /><path d="M12 4l3-3h1v5l-1 1z" fill="#f3b62a" /></>,
  <path d="M.5 0h15v5h-1c-.5-2.500-1.500-3-4-3v10.500c0 1.500.5 1.800 2 2V15.500H3.500V14.500c1.500-.2 2-.5 2-2V2c-2.500 0-3.500.5-4 3h-1z" fill="#111" />,
  <><path d="M.5 10.500h10l5 3.500H5z" fill="#f4f4f4" stroke="#333" /><path d="M.5 6.500h10l5 3.500H5z" fill="#f4f4f4" stroke="#333" /><path d="M.5 2.500h10l5 3.500H5z" fill="#f4f4f4" stroke="#333" /></>,
  <><rect x=".5" y=".5" width="15" height="15" fill="#fff" stroke="#111" /><path d="M1 1h14v3H1z" fill="#b9cde8" /><path d="M.5 4.500h15M6.500 7L3.500 9.500l3 2.500M9.500 7l3 2.500-3 2.500" stroke="#111" /></>,
  <><path d="M.5 0v16" stroke="#c33" /><path d="M2.500 1h6v3.500h-6zM2.500 6.500h13V10h-13zM2.500 12h10v3.500h-10z" fill="#b9cde8" stroke="#334" /></>,
  "sep",
  <><path d="M1.500 .5h9l4 4v11h-13z" fill="#f4f4f4" stroke="#999" /><path d="M2 5c0 4 2 4 3 5v5h3v-5c2-1 3-2 3-5M5 5v3h3V5" stroke="#777" strokeWidth="1.200" /><path d="M5 12h3v3H5z" fill="#3a6fb0" /></>,
  <><path d="M1 2l12 12M14 3L6 10" stroke="#888" strokeWidth="3.200" strokeDasharray="3 .5" /><path d="M1 2l12 12M14 3L7 9" stroke="#eee" strokeWidth="1.200" /><path d="M5 11l-2.500 2.500" stroke="#3a6fb0" strokeWidth="4" strokeLinecap="round" /><path d="M5 11l-2.500 2.500" stroke="#a8c8ea" strokeWidth="2" strokeLinecap="round" /></>,
];

const G = "#2e8b4a";
const dot = (x, y) => <circle cx={x} cy={y} r="2" fill="#9bb" stroke={G} strokeWidth="1.300" />;
const snapMain = <><path d="M3 3l10 10" stroke="#111" strokeWidth="1.500" /><path d="M10.500 6v5H6z" fill="#111" /><circle cx="3" cy="3" r="2.300" fill="#99f" stroke="#33e" strokeWidth="1.400" /><circle cx="13" cy="13" r="2.300" fill="#7a9" stroke={G} strokeWidth="1.400" /></>;
const on = (g) => ({ g, on: true });
const SNAPS = [
  on(snapMain), "sep", { g: snapMain },
  { g: <path d="M0 13.500h13.500M13.500 0v14" stroke="#5a9a5a" strokeDasharray="2 1.300" /> },
  { g: <><path d="M0 12.500h13.500M13.500 0v14" stroke="#666" strokeDasharray="2 1.300" />{dot(13, 13)}</> },
  { g: <><path d="M0 12.500h13.500M13.500 3v10" stroke="#222" strokeDasharray="2 1.300" />{dot(13, 4)}</> },
  { g: <><path d="M0 12.500h12.500M12.500 0v13" stroke="#222" strokeDasharray="2 1.300" />{dot(4, 4)}</> },
  "sep", on(snapMain),
  { g: <path d="M1 1c9 0 9 7 9 12M15 8c0 4-3 5-5 5-2-1-3-2-3-3" stroke="#2a7a2a" strokeWidth="1.500" /> },
  { g: <><path d="M0 15L15 2M1 11l15-6" stroke="#666" />{dot(8, 8)}</> },
  on(<><path d="M1 1c9 0 9 7 7 12M15 8c0 4-3 5-6 5" stroke="#777" strokeWidth="1.300" />{dot(8, 13)}</>),
  { g: <><path d="M1 2h6c3 2 3 7 3 11M15 8c0 4-3 5-5 5" stroke="#666" strokeWidth="1.200" /><rect x="5" y="2" width="4" height="4" fill="#696" stroke={G} /></> },
  { g: <><path d="M1 15l3-7M3 15l3-7M0 11l6-1M0 14l6-1M10 8l3-8M13 7l3-7M10 3l6-1M9 6l6-1" stroke="#c22" strokeWidth="1.200" />{dot(8, 8)}</> },
  "sep", on(snapMain),
  { g: <><path d="M0 13.500h13M12.500 2v12" stroke="#999" />{dot(5, 8)}</> },
  { g: <><path d="M0 14.500h13M12.500 1v13" stroke="#222" strokeDasharray="2 1.300" /><path d="M1 6.500h7M4.500 3v7" stroke="#222" /></> },
  { g: <><path d="M0 14h16" stroke="#7fbf8f" strokeWidth="3" /><path d="M6 1h5l5 13h-4l-1-3H7l-1 3H2zM8 8.500h2.500L9 4z" fill="#111" fillRule="evenodd" />{dot(3, 13)}</> },
  "sep",
  { g: <rect x="2.500" y="1.500" width="11" height="13.500" fill="url(#page)" stroke="#111" /> },
  on(<path d="M2.500 0v16M6.500 0v16M10.500 0v16M14.500 0v16M0 2.500h16M0 6.500h16M0 10.500h16M0 14.500h16" stroke="#00e" strokeWidth="1.200" />),
  on(<><path d="M.5 0v16M12.500 0v16" stroke="#11e" strokeWidth="1.200" /><path d="M5 15L11 1" stroke="#44d" strokeWidth="1.400" /></>),
];
const BarSep = () => <div className="flex h-3 items-center"><div className="h-px w-4 bg-[#9d9d9d]" /></div>;
const RightBars = () => (
  <div className="flex flex-1 bg-white pt-[2px]">
    <div className="flex w-[33px] shrink-0 flex-col items-center pr-[1px]">
      {COMMANDS.map((c, i) => c === "sep" ? <BarSep key={i} /> : <div key={i} className="flex h-[26px] items-center"><Svg>{c}</Svg></div>)}
    </div>
    <div className="flex w-[26px] shrink-0 flex-col items-center">
      {SNAPS.map((c, i) => c === "sep" ? <BarSep key={i} /> : (
        <div key={i} className={c.on ? "flex h-[26px] w-[26px] items-center justify-center border border-[#99d1ff] bg-[#cce8ff]" : "flex h-[26px] w-[26px] items-center justify-center"}>
          <Svg>{c.g}</Svg>
        </div>
      ))}
    </div>
  </div>
);

/* ---------- palette ---------- */
const COLORS = (
  "000000 1a1a1a 333333 4d4d4d 666666 808080 999999 b3b3b3 cccccc e6e6e6 ececec f2f2f2 f9f9f9 ffffff " +
  "800000 ff0000 808000 ffff00 008000 00ff00 008080 00ffff 000080 0000ff 800080 ff00ff " +
  "2b0000 550000 800000 aa0000 d40000 ff0000 ff2a2a ff5555 ff8080 ffaaaa ffd5d5 280b0b 501616 782121 a02c2c c83737 d35f5f de8787 e9afaf f4d7d7 241c1c 483737 6c5353 916f6f ac9393 c8b7b7 e3dbdb " +
  "2b1100 552200 803300 aa4400 d45500 ff6600 ff7f2a ff9955 ffb380 ffccaa ffe6d5 28170b 502d16 784421 a05a2c c87137 d38d5f deaa87 e9c6af f4e3d7 241f1c 483e37 6c5d53 917c6f ac9d93 c8beb7 e3dedb " +
  "2b2200 554400 806600 aa8800 d4aa00 ffcc00 ffd42a ffdd55 ffe680 ffeeaa fff6d5 28220b 504416 786721 a0892c c8ab37 d3bc5f decd87 e9ddaf f4eed7 24221c 484537 6c6753 918a6f aca793 c8c4b7 e3e2db " +
  "222b00 445500 668000 88aa00 aad400 ccff00 d4ff2a ddff55 e5ff80 eeffaa f6ffd5 22280b 445016 677821 89a02c abc837 bcd35f cdde87 dde9af eef4d7 22241c 454837 676c53 8a916f a7ac93 c4c8b7 e2e3db 112b00 225500"
).split(" ");
const Palette = () => (
  <div className="flex h-[35px] flex-col bg-[#f0f0f0]">
    <div className="h-px bg-[#a0a0a0]" />
    <div className="flex h-4">
      <div className="flex w-[1909px] shrink-0 overflow-hidden border-t border-black bg-white pl-px">
        <Svg s={15}><path d="M1 0l13 14M14 0L1 14" stroke="#8a1515" strokeWidth="1.300" /><path d="M.5 0v15" stroke="#000" /></Svg>
        {COLORS.map((c, i) => <div key={i} className="h-[14px] w-[14px] shrink-0" style={{ backgroundColor: "#" + c }} />)}
      </div>
      <div className="flex flex-1 justify-center pt-px"><Svg s={7}><path d="M6 0v7L2 3.500z" fill="#000" /></Svg></div>
    </div>
    <div className="h-[3px] border-b border-white" />
    <div className="flex flex-1 items-center pb-px">
      <div className="flex w-[21px] shrink-0 pl-[4px]"><Chevron d={LEFT} color="#b5b5b5" /></div>
      <div className="h-[14px] w-[589px] bg-[#cdcdcd]" />
      <div className="flex flex-1 justify-end pr-[14px]"><Chevron d={RIGHT} /></div>
    </div>
  </div>
);

/* ---------- status bar ---------- */
const StatusBar = () => (
  <div className="flex h-[34px] items-center overflow-hidden bg-[#f0f0f0] text-[12.500px] leading-[17px] tracking-[-0.35px] text-black">
    <div className="w-[70px] shrink-0 pl-[2px] pt-[2px]"><div>Fill:</div><div>Stroke:</div></div>
    <div className="w-[55px] shrink-0 pl-[2px] pt-[2px]"><div>N/A</div><div>N/A</div></div>
    <span className="w-[15px] shrink-0 text-[13px]">O:</span>
    <div className="flex h-[25px] w-[36px] shrink-0 items-center border border-r-0 border-[#a9a9b0] pl-[4px] text-[12.500px] text-[#8a8a8a]">0</div>
    <Spin className="h-[23px]" />
    <div className="ml-[3px] h-full w-px shrink-0 bg-[#a0a0a0]" />
    <div className="flex w-[40px] shrink-0 items-center justify-center gap-[10px] pl-px">
      <Svg s={10}><path d="M1 5c2-3 6-3 8 0-2 3-6 3-8 0M2 2l1 1.500M5 1v2M8 2L7 3.500M2 8l1-1.500M8 8L7 6.500M5 7v2" stroke="#666" strokeWidth=".9" /><circle cx="5" cy="5" r="2" fill="#333" /></Svg>
      <Lock open color="#ccc" />
    </div>
    <div className="flex h-full w-[78px] shrink-0 border border-[#a9a9a9] bg-white">
      <span className="flex flex-1 items-center pl-[10px] text-[13px]">(root)</span>
      <span className="flex w-[22px] items-center justify-center border border-[#a9a9a9] bg-[#e1e1e1]"><Chevron d={DOWN} w={1.200} color="#333" /></span>
    </div>
    <div className="flex-1 whitespace-nowrap pl-[2px] pt-px text-[14.500px] tracking-[-0.08px]"><b>Alt</b>: click to select under; scroll mouse-wheel to cycle-select; drag to move selected or select by touch</div>
    <div className="flex h-full w-[83px] shrink-0 items-center border-l border-[#a0a0a0] pl-[3px]">
      <div className="w-[21px] pt-[2px]"><div>X:</div><div>Y:</div></div>
      <div className="font-['Liberation_Mono',monospace] text-[13.330px] leading-[17px] tracking-[0px]"><div>776.59</div><div>657.46</div></div>
    </div>
    <span className="w-[12px] shrink-0 text-[13px]">Z:</span>
    <div className="flex h-[25px] w-[46px] shrink-0 items-center border border-[#a9a9b0] bg-white pl-[7px] text-[13px]">110%</div>
    <Spin dark className="h-[23px]" />
  </div>
);

/* ---------- taskbar ---------- */
const APPS = [
  { w: "w-[49px]", icon: <Svg s={20}><path d="M0 3l8-1.200v7.700H0zM9 1.700L20 0v9.500H9zM0 10.500h8v7.700L0 17zM9 10.500h11V20L9 18.300z" fill="#fff" /></Svg> },
  { w: "w-[71px]", icon: <Svg s={22}><path d="M1.500 1v3.500h12V1M1.500 21v-3.500h12V21M1.500 7.500h12v7h-12zM18.500 1v4M18.500 12v9" stroke="#fff" strokeWidth="1.300" /><path d="M17 7h3v3h-3z" fill="#fff" /></Svg> },
  { w: "w-[57px]", line: "split", icon: <Svg s={28} vb="0 0 48 48"><circle cx="24" cy="24" r="23" fill="#fff" /><path d="M24 24L4.100 12.500A23 23 0 0143.900 12.500H24z" fill="#d9493c" /><path d="M43.900 12.500A23 23 0 0124 47L34 30 34 18 24 12.500z" fill="#fbcf45" /><path d="M4.100 12.500A23 23 0 0024 47l10-17-10 5-10-5z" fill="#3ea055" /><circle cx="24" cy="24" r="11.500" fill="#fff" /><circle cx="24" cy="24" r="9" fill="#4a8af4" /></Svg> },
  { w: "w-[65px]", line: "full", icon: <Svg s={28}><path d="M1 3h11l3 3h11v19H1z" fill="#f7c544" /><path d="M1 3h11l2 3-3 3H1z" fill="#d8930c" /><path d="M1 9h10l3-2h13v18H1z" fill="#fcd462" /><path d="M5 26V17c0-1 1-2 2-2h13c1 0 2 1 2 2v9h-5v-5h-7v5z" fill="#3a94d6" /></Svg> },
  { w: "w-[61px]", icon: <Svg s={30}><path d="M8 2h22v26H8z" fill="#ca64ea" /><path d="M24 2h6v9h-6z" fill="#b04fd8" /><path d="M24 11h6v9h-6z" fill="#9332bf" /><path d="M24 20h6v8h-6z" fill="#ae4bd5" /><path d="M0 6h16v18H0z" fill="#7719aa" /><path d="M5 20V10.500l5.500 9V10" stroke="#fff" strokeWidth="2" /></Svg> },
  { w: "w-[61px]", icon: <div className="flex h-[28px] w-[28px] items-center justify-center rounded-full bg-[radial-gradient(circle_at_50%_90%,#7fd0ff,#2b7fd0_55%,#a9cdf0)] font-['Liberation_Serif',serif] text-[20px] text-white">R</div> },
  { w: "w-[63px]", icon: <Svg s={30}><path d="M9 9V5c0-3 2-4 6-4s6 1 6 4v4" stroke="#ddd" strokeWidth="1.800" /><path d="M1 7h28v20.500a2 2 0 01-2 2H3a2 2 0 01-2-2z" fill="#fff" /><path d="M8.500 12h6v6h-6z" fill="#f25022" /><path d="M15.500 12h6v6h-6z" fill="#7fba00" /><path d="M8.500 19h6v6h-6z" fill="#00a4ef" /><path d="M15.500 19h6v6h-6z" fill="#ffb900" /></Svg> },
  { w: "w-[62px]", icon: <Svg s={30}><path d="M8 2h22v7H8z" fill="#41a5ee" /><path d="M8 9h22v6H8z" fill="#2b7cd3" /><path d="M8 15h22v6H8z" fill="#185abd" /><path d="M8 21h22v7H8z" fill="#103f91" /><path d="M0 7h16v16H0z" fill="#185abd" /><path d="M3 10.500l2 8.500L8 11.500 11 19l2-8.500" stroke="#fff" strokeWidth="1.700" /></Svg> },
];
const Taskbar = () => (
  <div className="flex h-[50px] bg-[#1d1d1d] text-white">
    <div className="w-[6px]" />
    {APPS.map((a, i) => (
      <div key={i} className={`${a.w} flex shrink-0 flex-col items-center`}>
        <div className="flex flex-1 items-center pt-[2px]">{a.icon}</div>
        <div className="flex h-[3px]">
          {a.line === "split" && <><div className="w-10 bg-[#76b9ed]" /><div className="w-[11px] bg-[#4f7ea3]" /></>}
          {a.line === "full" && <div className="w-[51px] bg-[#76b9ed]" />}
        </div>
      </div>
    ))}
    <div className="ml-[1px] flex w-[61px] shrink-0 flex-col items-center bg-[#484848]">
      <div className="flex flex-1 items-center"><InkscapeLogo s={30} /></div>
      <div className="h-[3px] w-full bg-[#76b9ed]" />
    </div>
    <div className="flex flex-1 items-center justify-end">
      <Svg s={18}><path d="M1 13.500L9 5l8 8.500" stroke="#fff" strokeWidth="1.300" /></Svg>
      <Svg s={18} className="ml-[22px]"><path d="M2 17C2 9 8 2 16 2M5.500 17C5.500 11 10 5.500 16 5.500M9 17c0-4 3-8 7-8M12 17c0-2 1.500-4.500 4-4.500" stroke="#ccc" /><circle cx="15" cy="16" r="1.500" fill="#fff" /></Svg>
      <Svg s={20} className="ml-[19px]"><path d="M1 7.500h3l4.500-4v14l-4.500-4H1z" stroke="#fff" /><path d="M12 7.500l6 6M18 7.500l-6 6" stroke="#fff" strokeWidth="1.200" /></Svg>
      <Svg s={20} className="ml-[21px]"><rect x=".5" y="5.500" width="17" height="10" stroke="#fff" strokeWidth="1.200" /><path d="M2.500 7.500h12v6h-12z" fill="#fff" /><path d="M19 8.500v4" stroke="#fff" strokeWidth="1.500" /></Svg>
      <Svg s={22} className="ml-[23px]"><path d="M8 19L10 8l5-7 2 1-1 7zM8 19c-3 3-8 1-7-2s4-5 6-2M11 12c3-4 7-5 9-2s-1 3-3 2-3 1-5 2M13 4l3 2" stroke="#ddd" strokeWidth="1.200" /></Svg>
      <span className="ml-[23px] w-[30px] text-[14px] tracking-[-0.2px]">ENG</span>
      <div className="ml-[12px] flex w-[80px] flex-col items-center whitespace-nowrap text-[14.500px] leading-[23px] tracking-[-0.2px]"><div>17:46</div><div>28/06/2019</div></div>
      <div className="relative ml-[22px] h-[30px] w-[30px]">
        <Svg s={30}><path d="M0 5h20v17H8l-4 4v-4H0z" fill="#fff" /><path d="M4 9.500h12M4 13.500h12M4 17.500h8" stroke="#222" /></Svg>
        <div className="absolute left-[9px] top-[14px] flex h-5 w-5 items-center justify-center rounded-full border border-[#888] bg-[#333] text-[13px] font-semibold">5</div>
      </div>
      <div className="ml-[15px] mr-[5px] h-full w-px bg-[#555]" />
    </div>
  </div>
);

export default function App() {
  return (
    <div className={`flex h-[1080px] w-[1920px] flex-col overflow-hidden bg-white ${UI}`}>
      <Gradients />
      <TitleBar />
      <MenuBar />
      <ToolControls />
      <div className="flex h-[866px] shrink-0">
        <Toolbox />
        <CanvasArea />
        <RightBars />
      </div>
      <Palette />
      <StatusBar />
      <Taskbar />
    </div>
  );
}
